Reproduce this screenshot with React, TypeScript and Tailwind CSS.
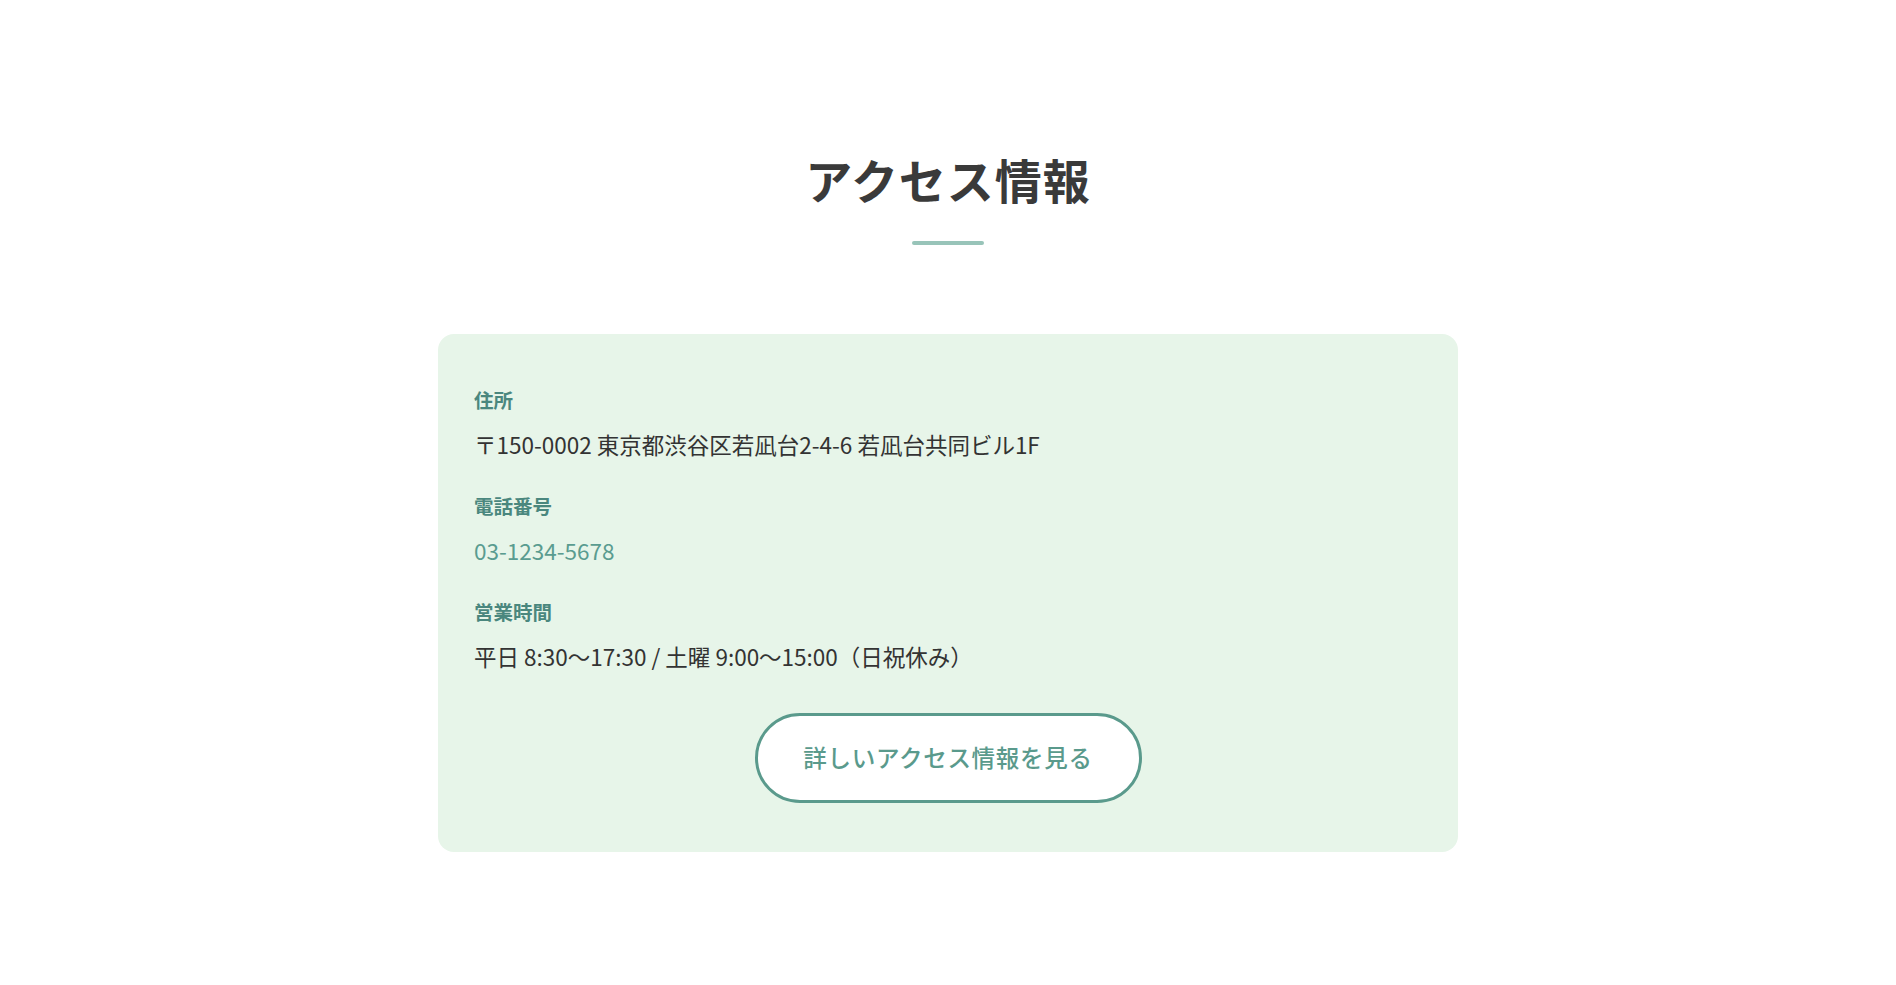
const font = { fontFamily: '"Noto Sans CJK JP", "Noto Sans", sans-serif' };

type InfoItem = {
  label: string;
  value: string;
  href?: string;
};

const items: InfoItem[] = [
  { label: "住所", value: "〒150-0002 東京都渋谷区若凪台2-4-6 若凪台共同ビル1F" },
  { label: "電話番号", value: "03-1234-5678", href: "tel:0312345678" },
  { label: "営業時間", value: "平日 8:30〜17:30 / 土曜 9:00〜15:00（日祝休み）" },
];

export default function App() {
  return (
    <div className="min-h-screen bg-white text-[#333333]" style={font}>
      <section className="mx-auto flex w-[1020px] flex-col items-center pt-[155px] pb-[135px]">
        <h2 className="text-[47px] font-bold leading-none tracking-[0.02em] text-[#3a3a3a]">
          アクセス情報
        </h2>
        <span className="mt-[39px] h-1 w-[72px] rounded-full bg-[#98c4b9]" />

        <div className="mt-[89px] w-full rounded-2xl bg-[#e7f5e9] pt-[52px] pr-9 pb-[49px] pl-9">
          <dl className="flex flex-col gap-[30px]">
            {items.map((item) => (
              <div key={item.label}>
                <dt className="text-[19.5px] font-bold leading-7 text-[#4a877e]">{item.label}</dt>
                <dd className="mt-3 text-[22.5px] leading-9">
                  {item.href ? (
                    <a href={item.href} className="text-[#5a9c90]">
                      {item.value}
                    </a>
                  ) : (
                    item.value
                  )}
                </dd>
              </div>
            ))}
          </dl>

          <div className="mt-[39px] flex justify-center">
            <a
              href="#access"
              className="flex h-[90px] w-[387px] items-center justify-center rounded-full border-[3px] border-[#5a9a8c] bg-white text-[23.5px] font-medium tracking-[0.03em] text-[#5a9a8c]"
            >
              詳しいアクセス情報を見る
            </a>
          </div>
        </div>
      </section>
    </div>
  );
}
